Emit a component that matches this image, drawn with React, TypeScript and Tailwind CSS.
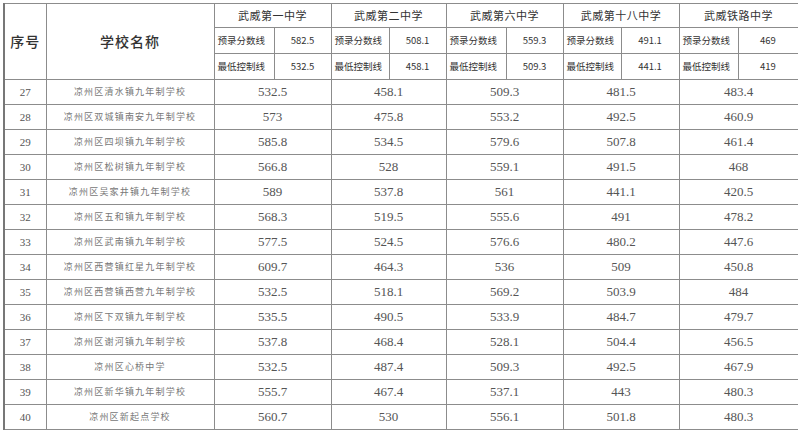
import React from 'react'

type Row = [number, string, string, string, string, string, string]

const ROWS: Row[] = [
  [27, '凉州区清水镇九年制学校', '532.5', '458.1', '509.3', '481.5', '483.4'],
  [28, '凉州区双城镇南安九年制学校', '573', '475.8', '553.2', '492.5', '460.9'],
  [29, '凉州区四坝镇九年制学校', '585.8', '534.5', '579.6', '507.8', '461.4'],
  [30, '凉州区松树镇九年制学校', '566.8', '528', '559.1', '491.5', '468'],
  [31, '凉州区吴家井镇九年制学校', '589', '537.8', '561', '441.1', '420.5'],
  [32, '凉州区五和镇九年制学校', '568.3', '519.5', '555.6', '491', '478.2'],
  [33, '凉州区武南镇九年制学校', '577.5', '524.5', '576.6', '480.2', '447.6'],
  [34, '凉州区西营镇红星九年制学校', '609.7', '464.3', '536', '509', '450.8'],
  [35, '凉州区西营镇西营九年制学校', '532.5', '518.1', '569.2', '503.9', '484'],
  [36, '凉州区下双镇九年制学校', '535.5', '490.5', '533.9', '484.7', '479.7'],
  [37, '凉州区谢河镇九年制学校', '537.8', '468.4', '528.1', '504.4', '456.5'],
  [38, '凉州区心桥中学', '532.5', '487.4', '509.3', '492.5', '467.9'],
  [39, '凉州区新华镇九年制学校', '555.7', '467.4', '537.1', '443', '480.3'],
  [40, '凉州区新起点学校', '560.7', '530', '556.1', '501.8', '480.3'],
]

const SCHOOLS = [
  { name: '武威第一中学', plan: '582.5', min: '532.5' },
  { name: '武威第二中学', plan: '508.1', min: '458.1' },
  { name: '武威第六中学', plan: '559.3', min: '509.3' },
  { name: '武威第十八中学', plan: '491.1', min: '441.1' },
  { name: '武威铁路中学', plan: '469', min: '419' },
]

const COLS = [42, 168, 60, 57, 58, 57, 60, 57, 58, 58, 59, 60]

const sans = "font-['Noto_Sans_CJK_SC','Noto_Sans',sans-serif]"
const serif = "font-['Liberation_Serif','Noto_Sans_CJK_SC',serif]"
const cell = 'border border-[#8c8c8c] p-0 text-center align-middle'

export default function App() {
  return (
    <div className="w-[798px] h-[435px] bg-white pl-[3px] pt-[3px]">
      <table className="table-fixed border-collapse w-[794px] text-[#333]">
        <colgroup>
          {COLS.map((w, i) => (
            <col key={i} style={{ width: w }} />
          ))}
        </colgroup>
        <thead>
          <tr className="h-[24px]">
            <th rowSpan={3} className={`${cell} ${sans} text-[14px] font-medium tracking-[1px] border-l-2 border-l-[#777]`}>序号</th>
            <th rowSpan={3} className={`${cell} ${sans} text-[14px] font-medium tracking-[1px]`}>学校名称</th>
            {SCHOOLS.map(s => (
              <th key={s.name} colSpan={2} className={`${cell} ${sans} text-[11px] font-normal tracking-[0.5px]`}>
                {s.name}
              </th>
            ))}
          </tr>
          <tr className="h-[26px]">
            {SCHOOLS.map(s => (
              <React.Fragment key={s.name}>
                <td className={`${cell} ${sans} text-[9.5px] text-left pl-[3px]`}>预录分数线</td>
                <td className={`${cell} ${sans} text-[9.5px]`}>{s.plan}</td>
              </React.Fragment>
            ))}
          </tr>
          <tr className="h-[26px]">
            {SCHOOLS.map(s => (
              <React.Fragment key={s.name}>
                <td className={`${cell} ${sans} text-[9.5px] text-left pl-[3px]`}>最低控制线</td>
                <td className={`${cell} ${sans} text-[9.5px]`}>{s.min}</td>
              </React.Fragment>
            ))}
          </tr>
        </thead>
        <tbody>
          {ROWS.map(r => (
            <tr key={r[0]} className="h-[25px]">
              <td className={`${cell} ${serif} text-[11px] text-[#555] border-l-2 border-l-[#777]`}>{r[0]}</td>
              <td className={`${cell} ${sans} text-[9px] text-[#777] tracking-[1.2px]`}>{r[1]}</td>
              {r.slice(2).map((v, i) => (
                <td key={i} colSpan={2} className={`${cell} ${serif} text-[13px] text-[#555]`}>
                  {v}
                </td>
              ))}
            </tr>
          ))}
        </tbody>
      </table>
    </div>
  )
}
